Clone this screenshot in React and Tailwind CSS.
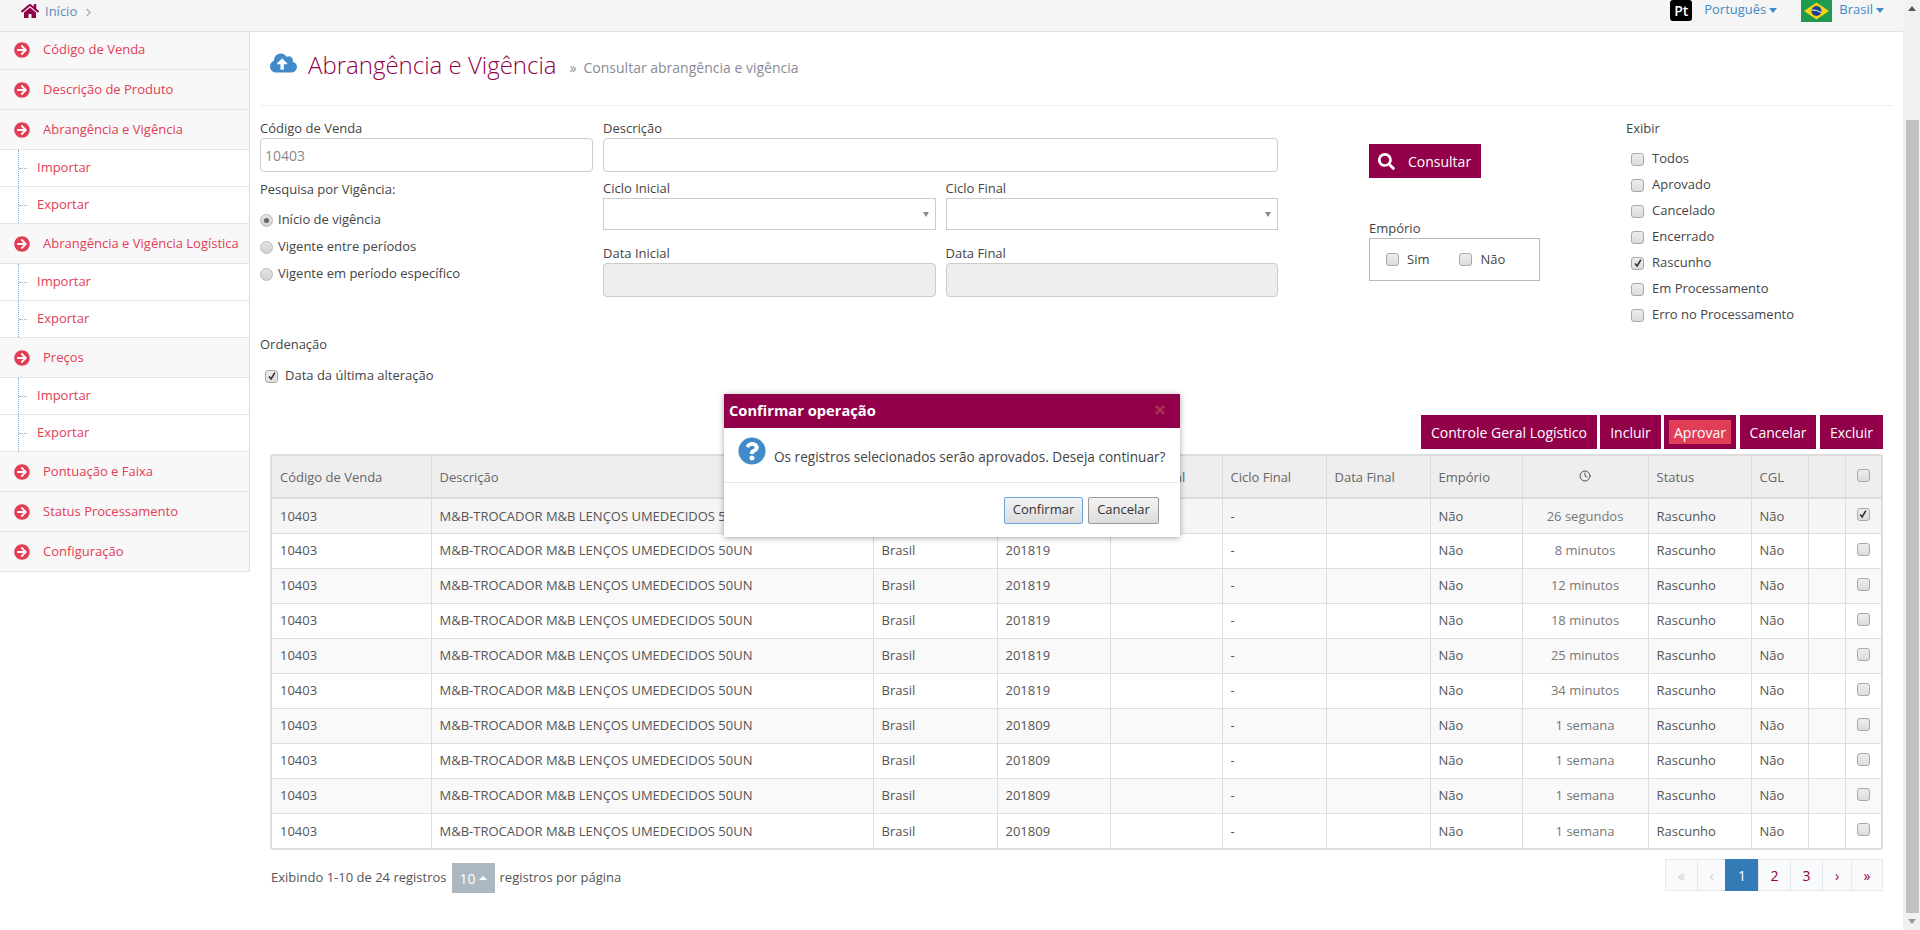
import React from 'react';
import { FaArrowCircleRight, FaCloudUploadAlt, FaHome, FaQuestionCircle, FaSearch, FaTimes } from 'react-icons/fa';
import { ChevronRight, Clock } from 'lucide-react';

const menu = [
  { label: 'Código de Venda', first: true },
  { label: 'Descrição de Produto' },
  { label: 'Abrangência e Vigência', subs: ['Importar', 'Exportar'] },
  { label: 'Abrangência e Vigência Logística', subs: ['Importar', 'Exportar'] },
  { label: 'Preços', subs: ['Importar', 'Exportar'] },
  { label: 'Pontuação e Faixa' },
  { label: 'Status Processamento' },
  { label: 'Configuração' },
];

const columns = [
  { title: 'Código de Venda', width: 'w-[159px]' },
  { title: 'Descrição', width: 'w-[442px]' },
  { title: 'País', width: 'w-[124px]' },
  { title: 'Ciclo Inicial', width: 'w-[113px]' },
  { title: 'Data Inicial', width: 'w-[112px]' },
  { title: 'Ciclo Final', width: 'w-[104px]' },
  { title: 'Data Final', width: 'w-[104px]' },
  { title: 'Empório', width: 'w-[92px]' },
  { title: 'clock', width: 'w-[126px]' },
  { title: 'Status', width: 'w-[103px]' },
  { title: 'CGL', width: 'w-[57px]' },
  { title: '', width: 'w-[37px]' },
  { title: 'check', width: 'w-[36px]' },
];

const rows = [
  { ciclo: '201819', tempo: '26 segundos', checked: true },
  { ciclo: '201819', tempo: '8 minutos' },
  { ciclo: '201819', tempo: '12 minutos' },
  { ciclo: '201819', tempo: '18 minutos' },
  { ciclo: '201819', tempo: '25 minutos' },
  { ciclo: '201819', tempo: '34 minutos' },
  { ciclo: '201809', tempo: '1 semana' },
  { ciclo: '201809', tempo: '1 semana' },
  { ciclo: '201809', tempo: '1 semana' },
  { ciclo: '201809', tempo: '1 semana' },
];

const status = ['Todos', 'Aprovado', 'Cancelado', 'Encerrado', 'Rascunho', 'Em Processamento', 'Erro no Processamento'];

const Check = ({ checked }) => (
  <span className="inline-flex w-[13px] h-[13px] shrink-0 items-center justify-center rounded-[3px] border border-[#a9a9a9] bg-linear-to-b from-[#ededed] to-[#dcdcdc]">
    {checked && (
      <svg viewBox="0 0 12 12" className="w-[10px] h-[10px]">
        <path d="M2.5 6.5 L5 9.5 L9.5 2" fill="none" stroke="#333" strokeWidth="2" />
      </svg>
    )}
  </span>
);

const Radio = ({ checked }) => (
  <span className="inline-flex w-[13px] h-[13px] shrink-0 items-center justify-center rounded-full border border-[#bbb] bg-linear-to-b from-[#e4e4e4] to-[#d2d2d2]">
    {checked && <span className="w-[5px] h-[5px] rounded-full bg-[#666]" />}
  </span>
);

const Caret = () => <span className="inline-block ml-[3px] mb-[1px] border-x-[4px] border-x-transparent border-t-[5px] border-t-[#428bca]" />;

const FieldLabel = ({ children }) => <div className="h-5 leading-5 text-[#444]">{children}</div>;

const SelectBox = () => (
  <div className="flex h-[32px] items-center justify-end border border-[#ccc] bg-white pr-[6px]">
    <span className="border-x-[3px] border-x-transparent border-t-[5px] border-t-[#888]" />
  </div>
);

const ActionButton = ({ children, className = '' }) => (
  <button className={`h-[34px] bg-[#92004a] text-[14px] text-white ${className}`}>{children}</button>
);

const PageLink = ({ children, className = '' }) => (
  <span className={`flex h-[32px] items-center justify-center border border-[#e3e8ec] bg-[#f9fafb] -ml-px first:ml-0 ${className}`}>{children}</span>
);

const Sidebar = () => (
  <aside className="w-[250px] shrink-0 self-start border-r border-[#ddd] text-[13px] text-[#e23d56]">
    {menu.map((item) => (
      <div key={item.label}>
        <div className={`flex items-center border-b border-[#e5e5e5] bg-[#f8f8f8] pl-[14px] ${item.first ? 'h-[38px] pb-[1px]' : 'h-[40px]'}`}>
          <FaArrowCircleRight className="w-[16px] h-[16px] mr-[13px]" />
          <span>{item.label}</span>
        </div>
        {item.subs && item.subs.map((sub) => (
          <div key={sub} className="flex h-[37px] items-center border-b border-[#e5e5e5] bg-white">
            <span className="ml-[18px] h-full border-l border-dotted border-[#7fb0d8]" />
            <span className="w-[8px] border-t border-dotted border-[#aaa]" />
            <span className="ml-[10px]">{sub}</span>
          </div>
        ))}
      </div>
    ))}
  </aside>
);

const Filters = () => (
  <div className="flex mt-3 text-[13px]">
    <div className="w-[333px]">
      <FieldLabel>Código de Venda</FieldLabel>
      <div className="flex h-[34px] items-center rounded-[4px] border border-[#ccc] px-[4px] text-[14px] text-[#888]">10403</div>
      <div className="mt-[7px]"><FieldLabel>Pesquisa por Vigência:</FieldLabel></div>
      <div className="mt-[13px] flex flex-col gap-[11px] text-[#444]">
        <label className="flex h-4 items-center gap-[5px]"><Radio checked /> Início de vigência</label>
        <label className="flex h-4 items-center gap-[5px]"><Radio /> Vigente entre períodos</label>
        <label className="flex h-4 items-center gap-[5px]"><Radio /> Vigente em período específico</label>
      </div>
      <div className="mt-[52px]"><FieldLabel>Ordenação</FieldLabel></div>
      <label className="mt-[13px] ml-[5px] flex h-[18px] items-center gap-[7px] text-[#444]"><Check checked /> Data da última alteração</label>
    </div>
    <div className="ml-[10px] w-[675px]">
      <FieldLabel>Descrição</FieldLabel>
      <div className="h-[34px] rounded-[4px] border border-[#ccc]" />
      <div className="mt-[6px] grid grid-cols-2 gap-x-[10px]">
        <div>
          <FieldLabel>Ciclo Inicial</FieldLabel>
          <SelectBox />
        </div>
        <div>
          <FieldLabel>Ciclo Final</FieldLabel>
          <SelectBox />
        </div>
        <div className="mt-[13px]">
          <FieldLabel>Data Inicial</FieldLabel>
          <div className="h-[34px] rounded-[4px] border border-[#ccc] bg-[#eee]" />
        </div>
        <div className="mt-[13px]">
          <FieldLabel>Data Final</FieldLabel>
          <div className="h-[34px] rounded-[4px] border border-[#ccc] bg-[#eee]" />
        </div>
      </div>
    </div>
    <div className="ml-[91px] w-[171px]">
      <button className="mt-[26px] flex h-[34px] w-[112px] items-center bg-[#92004a] pl-[9px] text-[14px] text-white">
        <FaSearch className="w-[17px] h-[17px] mr-[13px]" /> Consultar
      </button>
      <div className="mt-[40px]"><FieldLabel>Empório</FieldLabel></div>
      <div className="flex h-[43px] items-center border border-[#bbb] pl-[16px] text-[#444]">
        <label className="flex items-center gap-[8px]"><Check /> Sim</label>
        <label className="ml-[30px] flex items-center gap-[8px]"><Check /> Não</label>
      </div>
    </div>
    <div className="ml-[86px]">
      <FieldLabel>Exibir</FieldLabel>
      <div className="mt-[8px] ml-[5px] flex flex-col text-[#444]">
        {status.map((s) => (
          <label key={s} className="flex h-[26px] items-center gap-[8px]"><Check checked={s === 'Rascunho'} /> {s}</label>
        ))}
      </div>
    </div>
  </div>
);

const DataTable = () => (
  <div className="ml-[10px] mr-[10px] rounded-[3px] border-2 border-[#ddd]">
    <table className="w-full table-fixed border-collapse text-[13px] text-[#555]">
      <colgroup>
        {columns.map((c, i) => <col key={i} className={c.width} />)}
      </colgroup>
      <thead>
        <tr className="h-[42px] border-b-2 border-[#ddd] bg-[#eee] text-[#666]">
          {columns.map((c, i) => (
            <th key={i} className="border-l border-[#ddd] px-2 pt-[2px] text-left font-normal first:border-l-0">
              {c.title === 'clock' ? <Clock className="mx-auto mb-[3px] w-[12px] h-[12px] text-[#555]" /> : c.title === 'check' ? <span className="flex justify-center pb-[5px]"><Check /></span> : c.title}
            </th>
          ))}
        </tr>
      </thead>
      <tbody>
        {rows.map((row, i) => (
          <tr key={i} className={`h-[35px] border-b border-[#ddd] last:border-b-0 [&>td]:pt-px ${i === 0 ? 'bg-[#f5f5f5]' : i % 2 === 0 ? 'bg-[#f9f9f9]' : 'bg-white'}`}>
            <td className="px-2">10403</td>
            <td className="border-l border-[#ddd] px-2 whitespace-nowrap">M&amp;B-TROCADOR M&amp;B LENÇOS UMEDECIDOS 50UN</td>
            <td className="border-l border-[#ddd] px-2">Brasil</td>
            <td className="border-l border-[#ddd] px-2">{row.ciclo}</td>
            <td className="border-l border-[#ddd] px-2"></td>
            <td className="border-l border-[#ddd] px-2">-</td>
            <td className="border-l border-[#ddd] px-2"></td>
            <td className="border-l border-[#ddd] px-2">Não</td>
            <td className="border-l border-[#ddd] px-2 text-center text-[#777]">{row.tempo}</td>
            <td className="border-l border-[#ddd] px-2">Rascunho</td>
            <td className="border-l border-[#ddd] px-2">Não</td>
            <td className="border-l border-[#ddd] px-2"></td>
            <td className="border-l border-[#ddd]"><span className="flex justify-center pb-[4px]"><Check checked={row.checked} /></span></td>
          </tr>
        ))}
      </tbody>
    </table>
  </div>
);

const ConfirmDialog = () => (
  <div className="absolute left-[724px] top-[394px] w-[456px] bg-white text-[13px] shadow-[0_1px_6px_rgba(0,0,0,0.35)]">
    <div className="flex h-[34px] items-center justify-between bg-[#92004a] pb-[2px] pl-[5px] pr-[13px]">
      <span className="text-[14.7px] font-bold text-white">Confirmar operação</span>
      <FaTimes className="w-[14px] h-[14px] text-[#a83050]" />
    </div>
    <div className="flex h-[55px] border-b border-[#e5e9ec] pl-[14px] pt-[9px] text-[#444]">
      <FaQuestionCircle className="w-[28px] h-[28px] text-[#428bca]" />
      <span className="ml-[8px] mt-[10px] whitespace-nowrap text-[13.6px]">Os registros selecionados serão aprovados. Deseja continuar?</span>
    </div>
    <div className="flex h-[54px] items-center justify-end gap-[5px] pr-[21px] text-[#333]">
      <button className="h-[27px] w-[79px] rounded-[2px] border border-[#6fa3e0] bg-linear-to-b from-[#f4f4f4] to-[#dcdcdc]">Confirmar</button>
      <button className="h-[27px] w-[71px] rounded-[2px] border border-[#999] bg-linear-to-b from-[#f4f4f4] to-[#dcdcdc]">Cancelar</button>
    </div>
  </div>
);

const App = () => {
  return (
    <div className="relative flex h-[930px] overflow-hidden bg-white font-['Open_Sans',sans-serif]">
      <div className="flex-1 min-w-0">
        {/* top bar */}
        <header className="flex h-[32px] items-start border-b border-[#e2e2e2] bg-[#f5f5f5] text-[13px] text-[#5b8db8]">
          <FaHome className="ml-[21px] mt-[3px] w-[18px] h-[16px] text-[#92004a]" />
          <span className="ml-[6px] mt-[2px]">Início</span>
          <ChevronRight className="ml-[5px] mt-[6px] w-[13px] h-[13px] text-[#aaa]" />
          <div className="ml-auto flex items-start pr-[19px] text-[#428bca]">
            <span className="flex h-[21px] w-[22px] items-center justify-center rounded-[3px] bg-black text-[14px] font-semibold text-white">Pt</span>
            <span className="ml-[12px]">Português<Caret /></span>
            <svg viewBox="0 0 31 22" className="ml-[24px] w-[31px] h-[22px]">
              <rect width="31" height="22" fill="#1f9a50" />
              <path d="M15.5 2.5 L28 11 L15.5 19.5 L3 11 Z" fill="#f7d417" />
              <circle cx="15.5" cy="11" r="5" fill="#1e3f8b" />
              <path d="M11 10 Q15.5 9.5 20 12.5" stroke="#fff" strokeWidth="1" fill="none" />
            </svg>
            <span className="ml-[7px]">Brasil<Caret /></span>
          </div>
        </header>

        <div className="flex">
          <Sidebar />
          <main className="flex-1 min-w-0 pl-[10px] pr-[10px]">
            <div className="flex h-[74px] items-start border-b border-dotted border-[#ddd] pt-[17px]">
              <FaCloudUploadAlt className="ml-[10px] mt-[2px] w-[27px] h-[24px] text-[#428bca]" />
              <h1 className="ml-[11px] text-[24px] leading-[32px] font-light text-[#92004a]">Abrangência e Vigência</h1>
              <span className="ml-[13px] mt-[9px] text-[14px] leading-[20px] text-[#8a8a98]">»<span className="ml-[7px]">Consultar abrangência e vigência</span></span>
            </div>
            <Filters />
            <div className="mt-[30px] mr-[10px] flex justify-end">
              <ActionButton className="w-[176px]">Controle Geral Logístico</ActionButton>
              <ActionButton className="ml-[3px] w-[61px]">Incluir</ActionButton>
              <div className="ml-[3px] flex h-[34px] w-[72px] items-center justify-center bg-[#92004a]">
                <span className="flex h-[24px] w-[62px] items-center justify-center bg-[#e23d56] text-[14px] text-white">Aprovar</span>
              </div>
              <ActionButton className="ml-[4px] w-[76px]">Cancelar</ActionButton>
              <ActionButton className="ml-[4px] w-[63px]">Excluir</ActionButton>
            </div>
            <div className="mt-[5px]"><DataTable /></div>
            <div className="ml-[11px] mr-[10px] mt-[9px] flex items-start justify-between text-[13px] text-[#555]">
              <div className="mt-[4px] flex items-center">
                <span>Exibindo 1-10 de 24 registros</span>
                <span className="ml-[5px] flex h-[30px] w-[43px] items-center justify-center bg-[#abb7c1] text-[14px] text-white">
                  10
                  <span className="ml-[3px] border-x-[4px] border-x-transparent border-b-[4px] border-b-white" />
                </span>
                <span className="ml-[5px]">registros por página</span>
              </div>
              <nav className="flex text-[14px] text-[#92004a]">
                <PageLink className="w-[33px] text-[#ccc]">«</PageLink>
                <PageLink className="w-[29px] text-[#ccc]">‹</PageLink>
                <span className="flex h-[32px] w-[34px] -ml-px items-center justify-center bg-[#337ab7] text-white">1</span>
                <PageLink className="w-[33px]">2</PageLink>
                <PageLink className="w-[33px]">3</PageLink>
                <PageLink className="w-[30px]">›</PageLink>
                <PageLink className="w-[32px]">»</PageLink>
              </nav>
            </div>
          </main>
        </div>
      </div>

      {/* window scrollbar */}
      <div className="flex w-[17px] shrink-0 flex-col items-center bg-[#f1f1f1]">
        <span className="mt-[6px] border-x-[4px] border-x-transparent border-b-[5px] border-b-[#555]" />
        <div className="mt-[109px] ml-[2px] h-[793px] w-[13px] bg-[#c1c1c1]" />
        <span className="mt-[6px] border-x-[4px] border-x-transparent border-t-[5px] border-t-[#999]" />
      </div>

      <ConfirmDialog />
    </div>
  );
};

export default App;
